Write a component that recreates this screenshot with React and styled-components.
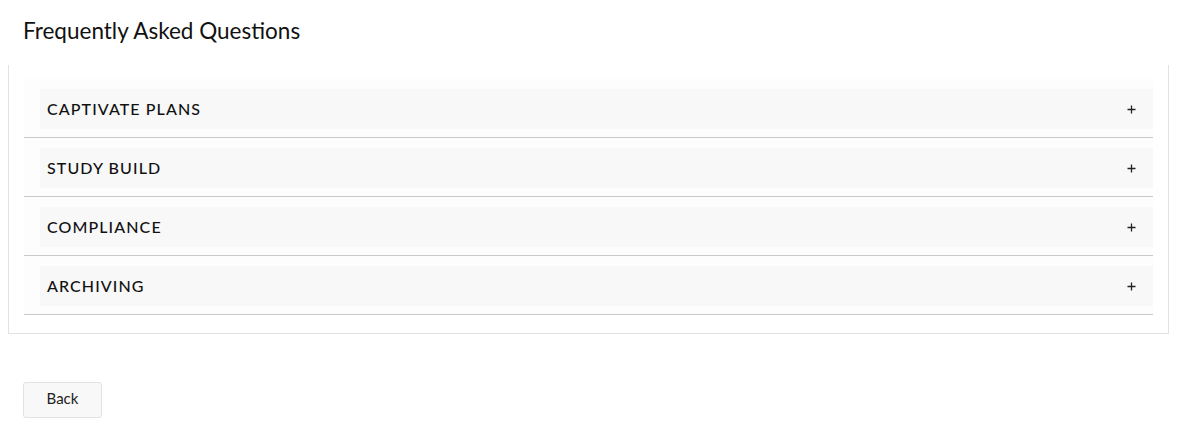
import React, { useState } from 'react';
import { styled, createGlobalStyle } from 'styled-components';

const GlobalStyle = createGlobalStyle`
  body {
    margin: 0;
    background: #fff;
    font-family: Lato, "Liberation Sans", sans-serif;
    color: #111;
  }
`;

const faqs = ['CAPTIVATE PLANS', 'STUDY BUILD', 'COMPLIANCE', 'ARCHIVING'];

const PlusIcon = () => (
  <svg width="9" height="9" viewBox="0 0 9 9">
    <path d="M4.5 0.5v8M0.5 4.5h8" stroke="#222" strokeWidth="1.3" />
  </svg>
);

export default function App() {
  const [open, setOpen] = useState(null);

  return (
    <Page>
      <GlobalStyle />
      <Title>Frequently Asked Questions</Title>

      <Card>
        {faqs.map((q, i) => (
          <Item key={q}>
            <ItemHeader onClick={() => setOpen(open === i ? null : i)}>
              <ItemTitle>{q}</ItemTitle>
              <PlusIcon />
            </ItemHeader>
          </Item>
        ))}
      </Card>

      <BackButton>Back</BackButton>
    </Page>
  );
}

const Page = styled.div`
  padding: 0 10px 0 8px;
  display: flex;
  flex-direction: column;
`;

const Title = styled.h2`
  margin: 0;
  padding: 17px 0 0 15px;
  height: 48px;
  box-sizing: border-box;
  font-size: 22.5px;
  font-weight: 400;
  letter-spacing: 0;
  color: #111;
`;

const Card = styled.div`
  margin-top: 17px;
  border: 1px solid #e2e2e2;
  border-top: none;
  padding: 14px 15px 18px 15px;
  display: flex;
  flex-direction: column;
`;

const Item = styled.div`
  padding: 10px 0 8px 16px;
  border-bottom: 1px solid #c9c9c9;
  background: #fdfdfd;
`;

const ItemHeader = styled.div`
  cursor: pointer;
  display: flex;
  align-items: center;
  justify-content: space-between;
  height: 40px;
  padding: 0 17px 0 7px;
  background: #f8f8f8;
`;

const ItemTitle = styled.span`
  font-size: 16px;
  font-weight: 500;
  letter-spacing: 1.1px;
  color: #111;
  padding-bottom: 1px;
`;

const BackButton = styled.button`
  align-self: flex-start;
  margin: 48px 0 0 15px;
  width: 79px;
  height: 36px;
  padding: 0 0 4px;
  background: #f8f8f8;
  border: 1px solid #e2e2e2;
  border-radius: 3px;
  font-family: Lato, "Liberation Sans", sans-serif;
  font-size: 15px;
  color: #222;
  cursor: pointer;
`;
